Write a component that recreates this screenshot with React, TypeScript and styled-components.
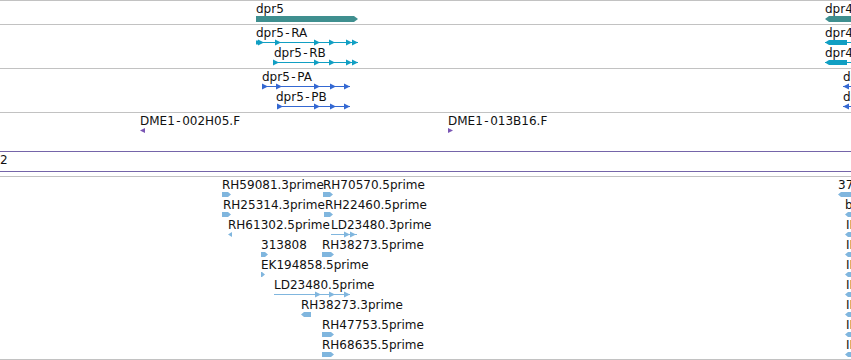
import React from "react";
import styled, { createGlobalStyle } from "styled-components";

const GlobalStyle = createGlobalStyle`
  html, body {
    margin: 0;
    padding: 0;
    background: #fff;
  }
  body {
    font-family: "DejaVu Sans", "Liberation Sans", sans-serif;
  }
`;

const Browser = styled.div`
  width: 851px;
  height: 360px;
  overflow: hidden;
  background: #fff;
  display: flex;
  flex-direction: column;
`;

const Track = styled.div<{ $height: number; $line?: string; $closed?: boolean; $gap?: number }>`
  position: relative;
  flex: none;
  height: ${(p) => p.$height}px;
  border-top: 1px solid ${(p) => p.$line || "#c2c2c2"};
  border-bottom: ${(p) => (p.$closed ? `1px solid ${p.$line || "#c2c2c2"}` : "none")};
  margin-top: ${(p) => p.$gap || 0}px;
  overflow: hidden;
`;

const TrackName = styled.span`
  position: absolute;
  left: 0;
  top: 1px;
  font-size: 12px;
  line-height: 14px;
  color: #111;
`;

const Label = styled.span<{ $x: number; $row: number }>`
  position: absolute;
  left: ${(p) => p.$x}px;
  top: ${(p) => 1 + p.$row * 20}px;
  font-size: 12px;
  line-height: 14px;
  color: #111;
  white-space: nowrap;
`;

const Dash = styled.span`
  margin: 0 1.5px;
`;

const GlyphBox = styled.svg<{ $x: number; $row: number }>`
  position: absolute;
  left: ${(p) => p.$x}px;
  top: ${(p) => 14 + p.$row * 20}px;
  overflow: visible;
`;

type Glyph =
  | { kind: "gene"; w: number; dir: 1 | -1 }
  | { kind: "tx"; w: number; dir: 1 | -1; arrows: number[]; lead?: boolean }
  | { kind: "utr"; w: number; dir: 1 | -1; block: number }
  | { kind: "est"; w: number; dir: 1 | -1 }
  | { kind: "tri"; w: number; dir: 1 | -1 };

interface Feature {
  x: number;
  gx?: number;
  row: number;
  label: string;
  glyph: Glyph;
}

const arrow = (a: number, key: number, size = 6) => (
  <polygon key={key} points={`${a},0.5 ${a + size},3.5 ${a},6.5`} />
);

function shape(g: Glyph) {
  const w = g.w;
  switch (g.kind) {
    case "gene":
      return <polygon points={`0,1 ${w - 4},1 ${w},4 ${w - 4},7 0,7`} />;
    case "tx":
      return (
        <>
          <rect x={0} y={3} width={w} height={1} />
          {g.lead && <rect x={0} y={1.5} width={3} height={4} />}
          {g.arrows.map((a, i) => arrow(g.lead && i === 0 ? a + 2 : a, i))}
        </>
      );
    case "utr":
      return (
        <>
          <rect x={0} y={3} width={w} height={1} />
          <polygon
            points={`${w - g.block},1 ${w - 4},1 ${w},3.5 ${w - 4},6 ${w - g.block},6`}
          />
        </>
      );
    case "est":
      return <polygon points={`0,1 ${w - 3},1 ${w},3.5 ${w - 3},6 0,6`} />;
    case "tri":
      return <polygon points={`0,1 ${w},3.5 0,6`} />;
  }
}

function FeatureGlyph({ f, color }: { f: Feature; color: string }) {
  const g = f.glyph;
  const body = shape(g);
  return (
    <GlyphBox $x={f.gx ?? f.x} $row={f.row} width={g.w} height={8} fill={color}>
      {g.dir === 1 ? body : <g transform={`translate(${g.w},0) scale(-1,1)`}>{body}</g>}
    </GlyphBox>
  );
}

function LabelText({ text }: { text: string }) {
  const parts = text.split("-");
  return (
    <>
      {parts.map((p, i) => (
        <React.Fragment key={i}>
          {i > 0 && <Dash>-</Dash>}
          {p}
        </React.Fragment>
      ))}
    </>
  );
}

function Features({ items, color }: { items: Feature[]; color: string }) {
  return (
    <>
      {items.map((f, i) => (
        <React.Fragment key={i}>
          <Label $x={f.x} $row={f.row}>
            <LabelText text={f.label} />
          </Label>
          <FeatureGlyph f={f} color={color} />
        </React.Fragment>
      ))}
    </>
  );
}

const genes: Feature[] = [
  { x: 256, row: 0, label: "dpr5", glyph: { kind: "gene", w: 102, dir: 1 } },
  { x: 825, row: 0, label: "dpr4", glyph: { kind: "gene", w: 40, dir: -1 } },
];

const transcripts: Feature[] = [
  {
    x: 256,
    row: 0,
    label: "dpr5-RA",
    glyph: { kind: "tx", w: 102, dir: 1, arrows: [0, 19, 58, 73, 90, 96], lead: true },
  },
  { x: 274, gx: 273, row: 1, label: "dpr5-RB", glyph: { kind: "tx", w: 85, dir: 1, arrows: [0, 41, 56, 73, 79] } },
  { x: 825, row: 0, label: "dpr4-RA", glyph: { kind: "utr", w: 40, dir: -1, block: 22 } },
  { x: 825, row: 1, label: "dpr4-RB", glyph: { kind: "utr", w: 40, dir: -1, block: 22 } },
];

const proteins: Feature[] = [
  { x: 262, row: 0, label: "dpr5-PA", glyph: { kind: "tx", w: 88, dir: 1, arrows: [0, 14, 52, 68, 82] } },
  { x: 276, gx: 277, row: 1, label: "dpr5-PB", glyph: { kind: "tx", w: 73, dir: 1, arrows: [0, 37, 53, 67] } },
  { x: 843, row: 0, label: "dpr4-PA", glyph: { kind: "tx", w: 30, dir: -1, arrows: [24] } },
  { x: 843, row: 1, label: "dpr4-PB", glyph: { kind: "tx", w: 30, dir: -1, arrows: [24] } },
];

const clones: Feature[] = [
  { x: 140, row: 0, label: "DME1-002H05.F", glyph: { kind: "tri", w: 5, dir: -1 } },
  { x: 448, row: 0, label: "DME1-013B16.F", glyph: { kind: "tri", w: 5, dir: 1 } },
];

const ests: Feature[] = [
  { x: 222, row: 0, label: "RH59081.3prime", glyph: { kind: "est", w: 9, dir: 1 } },
  { x: 323, row: 0, label: "RH70570.5prime", glyph: { kind: "est", w: 10, dir: 1 } },
  { x: 838, row: 0, label: "371309", glyph: { kind: "est", w: 16, dir: -1 } },
  { x: 223, gx: 222, row: 1, label: "RH25314.3prime", glyph: { kind: "est", w: 9, dir: 1 } },
  { x: 325, gx: 324, row: 1, label: "RH22460.5prime", glyph: { kind: "est", w: 9, dir: 1 } },
  { x: 845, row: 1, label: "bs16a09.y1", glyph: { kind: "est", w: 10, dir: -1 } },
  { x: 228, row: 2, label: "RH61302.5prime", glyph: { kind: "tri", w: 4, dir: -1 } },
  { x: 331, row: 2, label: "LD23480.3prime", glyph: { kind: "tx", w: 26, dir: 1, arrows: [13, 19] } },
  { x: 261, row: 3, label: "313808", glyph: { kind: "est", w: 7, dir: 1 } },
  { x: 322, row: 3, label: "RH38273.5prime", glyph: { kind: "est", w: 12, dir: 1 } },
  { x: 261, row: 4, label: "EK194858.5prime", glyph: { kind: "est", w: 4, dir: 1 } },
  { x: 274, row: 5, label: "LD23480.5prime", glyph: { kind: "tx", w: 76, dir: 1, arrows: [41, 55, 70] } },
  { x: 301, row: 6, label: "RH38273.3prime", glyph: { kind: "est", w: 10, dir: -1 } },
  { x: 322, row: 7, label: "RH47753.5prime", glyph: { kind: "est", w: 12, dir: 1 } },
  { x: 322, row: 8, label: "RH68635.5prime", glyph: { kind: "est", w: 12, dir: 1 } },
  ...[2, 3, 4, 5, 6, 7, 8].map((row) => ({
    x: 846,
    gx: 845,
    row,
    label: "IP0" + (4310 + row) + ".5prime",
    glyph: { kind: "est", w: 10, dir: -1 } as Glyph,
  })),
];

export default function App() {
  return (
    <>
      <GlobalStyle />
      <Browser>
        <Track $height={23}>
          <Features items={genes} color="#3f8f8f" />
        </Track>
        <Track $height={43}>
          <Features items={transcripts} color="#119fc3" />
        </Track>
        <Track $height={43}>
          <Features items={proteins} color="#3468d2" />
        </Track>
        <Track $height={38}>
          <Features items={clones} color="#7a56b4" />
        </Track>
        <Track $height={19} $line="#7565a9" $closed>
          <TrackName>2</TrackName>
        </Track>
        <Track $height={182} $gap={4} $closed>
          <Features items={ests} color="#80b6de" />
        </Track>
      </Browser>
    </>
  );
}
